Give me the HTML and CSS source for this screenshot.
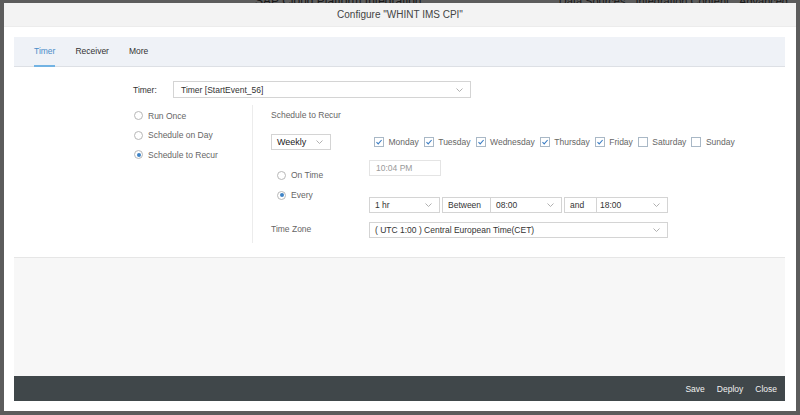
FILE: index.html
```html
<!DOCTYPE html>
<html lang="en">

<head>
  <meta charset="UTF-8">
  <meta name="viewport" content="width=device-width, initial-scale=1.0">
  <title>Configure Timer</title>
  <link rel="stylesheet" href="styles.css">
</head>

<body>
  <div class="app">
    <header class="app-header">
      <span class="app-title">SAP Cloud Platform Integration</span>
      <nav class="app-nav">
        <span>Data Sources</span>
        <span>Integration Content</span>
        <span>Advanced</span>
      </nav>
    </header>
  </div>
  <div class="overlay"></div>

  <div class="dialog">
    <div class="dialog-title">Configure "WHINT IMS CPI"</div>
    <div class="dialog-body">
      <ul class="tabs">
        <li class="active">Timer</li>
        <li>Receiver</li>
        <li>More</li>
      </ul>

      <div class="tab-content">
        <div class="field-row">
          <label class="field-label">Timer:</label>
          <div class="select timer-select">
            <span>Timer [StartEvent_56]</span>
            <svg class="chev" width="7" height="4" viewBox="0 0 7 4"><path d="M0.5 0.5 L3.5 3.5 L6.5 0.5" /></svg>
          </div>
        </div>

        <div class="schedule">
          <div class="schedule-type">
            <div class="radio-item"><span class="radio"></span>Run Once</div>
            <div class="radio-item"><span class="radio"></span>Schedule on Day</div>
            <div class="radio-item"><span class="radio checked"></span>Schedule to Recur</div>
          </div>

          <div class="recur">
            <div class="recur-title">Schedule to Recur</div>
            <div class="recur-body">
              <div class="recur-left">
                <div class="select weekly-select">
                  <span>Weekly</span>
                  <svg class="chev" width="7" height="4" viewBox="0 0 7 4"><path d="M0.5 0.5 L3.5 3.5 L6.5 0.5" /></svg>
                </div>
                <div class="recur-radios">
                  <div class="radio-item"><span class="radio"></span>On Time</div>
                  <div class="radio-item"><span class="radio checked"></span>Every</div>
                </div>
                <div class="tz-label">Time Zone</div>
              </div>

              <div class="recur-right">
                <div class="days">
                  <div class="day"><span class="checkbox checked"><svg width="8" height="8" viewBox="0 0 8 8"><path d="M1.5 4.2 L3.2 5.9 L6.6 2" /></svg></span>Monday</div>
                  <div class="day"><span class="checkbox checked"><svg width="8" height="8" viewBox="0 0 8 8"><path d="M1.5 4.2 L3.2 5.9 L6.6 2" /></svg></span>Tuesday</div>
                  <div class="day"><span class="checkbox checked"><svg width="8" height="8" viewBox="0 0 8 8"><path d="M1.5 4.2 L3.2 5.9 L6.6 2" /></svg></span>Wednesday</div>
                  <div class="day"><span class="checkbox checked"><svg width="8" height="8" viewBox="0 0 8 8"><path d="M1.5 4.2 L3.2 5.9 L6.6 2" /></svg></span>Thursday</div>
                  <div class="day"><span class="checkbox checked"><svg width="8" height="8" viewBox="0 0 8 8"><path d="M1.5 4.2 L3.2 5.9 L6.6 2" /></svg></span>Friday</div>
                  <div class="day"><span class="checkbox"></span>Saturday</div>
                  <div class="day"><span class="checkbox"></span>Sunday</div>
                </div>

                <div class="input time-input">10:04 PM</div>

                <div class="every-row">
                  <div class="select hr-select">
                    <span>1 hr</span>
                    <svg class="chev" width="7" height="4" viewBox="0 0 7 4"><path d="M0.5 0.5 L3.5 3.5 L6.5 0.5" /></svg>
                  </div>
                  <div class="joined">
                    <div class="input addon between">Between</div>
                    <div class="select time-select">
                      <span>08:00</span>
                      <svg class="chev" width="7" height="4" viewBox="0 0 7 4"><path d="M0.5 0.5 L3.5 3.5 L6.5 0.5" /></svg>
                    </div>
                  </div>
                  <div class="joined">
                    <div class="input addon and">and</div>
                    <div class="select time-select end">
                      <span>18:00</span>
                      <svg class="chev" width="7" height="4" viewBox="0 0 7 4"><path d="M0.5 0.5 L3.5 3.5 L6.5 0.5" /></svg>
                    </div>
                  </div>
                </div>

                <div class="select tz-select">
                  <span>( UTC 1:00 ) Central European Time(CET)</span>
                  <svg class="chev" width="7" height="4" viewBox="0 0 7 4"><path d="M0.5 0.5 L3.5 3.5 L6.5 0.5" /></svg>
                </div>
              </div>
            </div>
          </div>
        </div>
      </div>

      <div class="dialog-empty"></div>

      <div class="dialog-footer">
        <button>Save</button>
        <button>Deploy</button>
        <button>Close</button>
      </div>
    </div>
  </div>
</body>

</html>
```

FILE: styles.css
```css
* {
  box-sizing: border-box;
  margin: 0;
  padding: 0;
}

body {
  font-family: "Liberation Sans", Arial, sans-serif;
  font-size: 8.5px;
  color: #333;
  background-color: #b8b8b8;
  height: 415px;
  overflow: hidden;
}

/* page behind the dialog */

.app-header {
  display: flex;
  align-items: flex-end;
  height: 8px;
  overflow: hidden;
  padding: 0 12px 0 255px;
}

.app-title {
  font-size: 12px;
  line-height: 14px;
  color: #333;
}

.app-nav {
  margin-left: auto;
  display: flex;
  gap: 10px;
  font-size: 11px;
  line-height: 14px;
  color: #333;
}

.overlay {
  position: fixed;
  inset: 0;
  background: rgba(0, 0, 0, 0.5);
}

/* dialog */

.dialog {
  position: fixed;
  left: 4px;
  top: 3px;
  width: 792px;
  height: 408px;
  background: #fff;
  display: flex;
  flex-direction: column;
}

.dialog-title {
  height: 24px;
  line-height: 24px;
  background: #f3f3f3;
  border-bottom: 1px solid #ececec;
  text-align: center;
  font-size: 10px;
  color: #444;
}

.dialog-body {
  flex: 1;
  display: flex;
  flex-direction: column;
  padding: 10px 11px 10px 10px;
}

.tabs {
  list-style: none;
  display: flex;
  gap: 20px;
  height: 30px;
  padding-left: 20px;
  background: #eff2f7;
  border-bottom: 1px solid #dde0e5;
}

.tabs li {
  position: relative;
  line-height: 29px;
  color: #333;
}

.tabs li.active {
  color: #4a8cc8;
}

.tabs li.active::after {
  content: "";
  position: absolute;
  left: 0;
  right: 0;
  bottom: -1px;
  height: 2px;
  background: #72b3e3;
}

.tab-content {
  height: 191px;
  padding: 14px 0 0 119px;
  border-bottom: 1px solid #e6e6e6;
}

.dialog-empty {
  flex: 1;
  background: #f7f7f7;
}

.dialog-footer {
  height: 25px;
  background: #40474a;
  display: flex;
  justify-content: flex-end;
  align-items: center;
  gap: 12px;
  padding-right: 8px;
}

.dialog-footer button {
  background: none;
  border: none;
  font-family: inherit;
  font-size: 8.5px;
  color: #f2f2f2;
  cursor: pointer;
}

/* form controls */

.field-row {
  display: flex;
  align-items: center;
}

.field-label {
  width: 40px;
  color: #333;
}

.select,
.input {
  height: 17px;
  border: 1px solid #d4d4d4;
  background: #fff;
  display: flex;
  align-items: center;
  padding: 0 7px 0 5px;
  color: #333;
}

.select {
  justify-content: space-between;
}

.chev path {
  fill: none;
  stroke: #a8a8a8;
  stroke-width: 0.9;
}

.timer-select {
  width: 298px;
  padding-left: 7px;
}

.schedule {
  display: flex;
  margin-top: 7px;
}

.schedule-type {
  width: 120px;
  height: 138px;
  padding: 1px 0 0 1px;
  border-right: 1px solid #ececec;
}

.radio-item {
  display: flex;
  align-items: center;
  height: 19.6px;
  color: #666;
}

.radio {
  position: relative;
  width: 9px;
  height: 9px;
  border: 1px solid #b8b8b8;
  border-radius: 50%;
  margin-right: 5px;
  background: #fff;
}

.radio.checked::after {
  content: "";
  position: absolute;
  left: 1.5px;
  top: 1.5px;
  width: 4px;
  height: 4px;
  border-radius: 50%;
  background: #3f83c6;
}

.recur {
  padding: 1px 0 0 18px;
}

.recur-title {
  line-height: 19px;
  color: #666;
}

.recur-body {
  display: flex;
}

.recur-left {
  width: 98px;
}

.weekly-select {
  width: 60px;
  height: 16px;
  margin-top: 9px;
  color: #222;
  font-size: 9px;
}

.recur-radios {
  margin: 15px 0 0 6px;
}

.recur-radios .radio-item {
  height: 20px;
}

.tz-label {
  margin-top: 14px;
  line-height: 20px;
  color: #666;
}

.days {
  display: flex;
  gap: 5px;
  height: 16px;
  margin-top: 9px;
  padding-left: 5px;
}

.day {
  display: flex;
  align-items: center;
  color: #666;
}

.checkbox {
  width: 10px;
  height: 10px;
  border: 1px solid #a9b8c6;
  margin-right: 4.5px;
  background: #fff;
  display: flex;
  align-items: center;
  justify-content: center;
}

.checkbox path {
  fill: none;
  stroke: #3b7dc4;
  stroke-width: 1.1;
}

.time-input {
  width: 72px;
  height: 16px;
  margin-top: 10px;
  border-color: #e4e4e4;
  color: #9a9a9a;
  padding-left: 6px;
}

.every-row {
  display: flex;
  gap: 2px;
  margin-top: 21px;
}

.joined {
  display: flex;
}

.joined .select {
  margin-left: -1px;
}

.hr-select {
  width: 71px;
  height: 16px;
}

.between {
  width: 49px;
  height: 16px;
}

.and {
  width: 33px;
  height: 16px;
}

.time-select {
  width: 72px;
  height: 16px;
}

.time-select.end {
  padding-left: 3px;
}

.tz-select {
  width: 299px;
  height: 16px;
  margin-top: 9px;
}
```
